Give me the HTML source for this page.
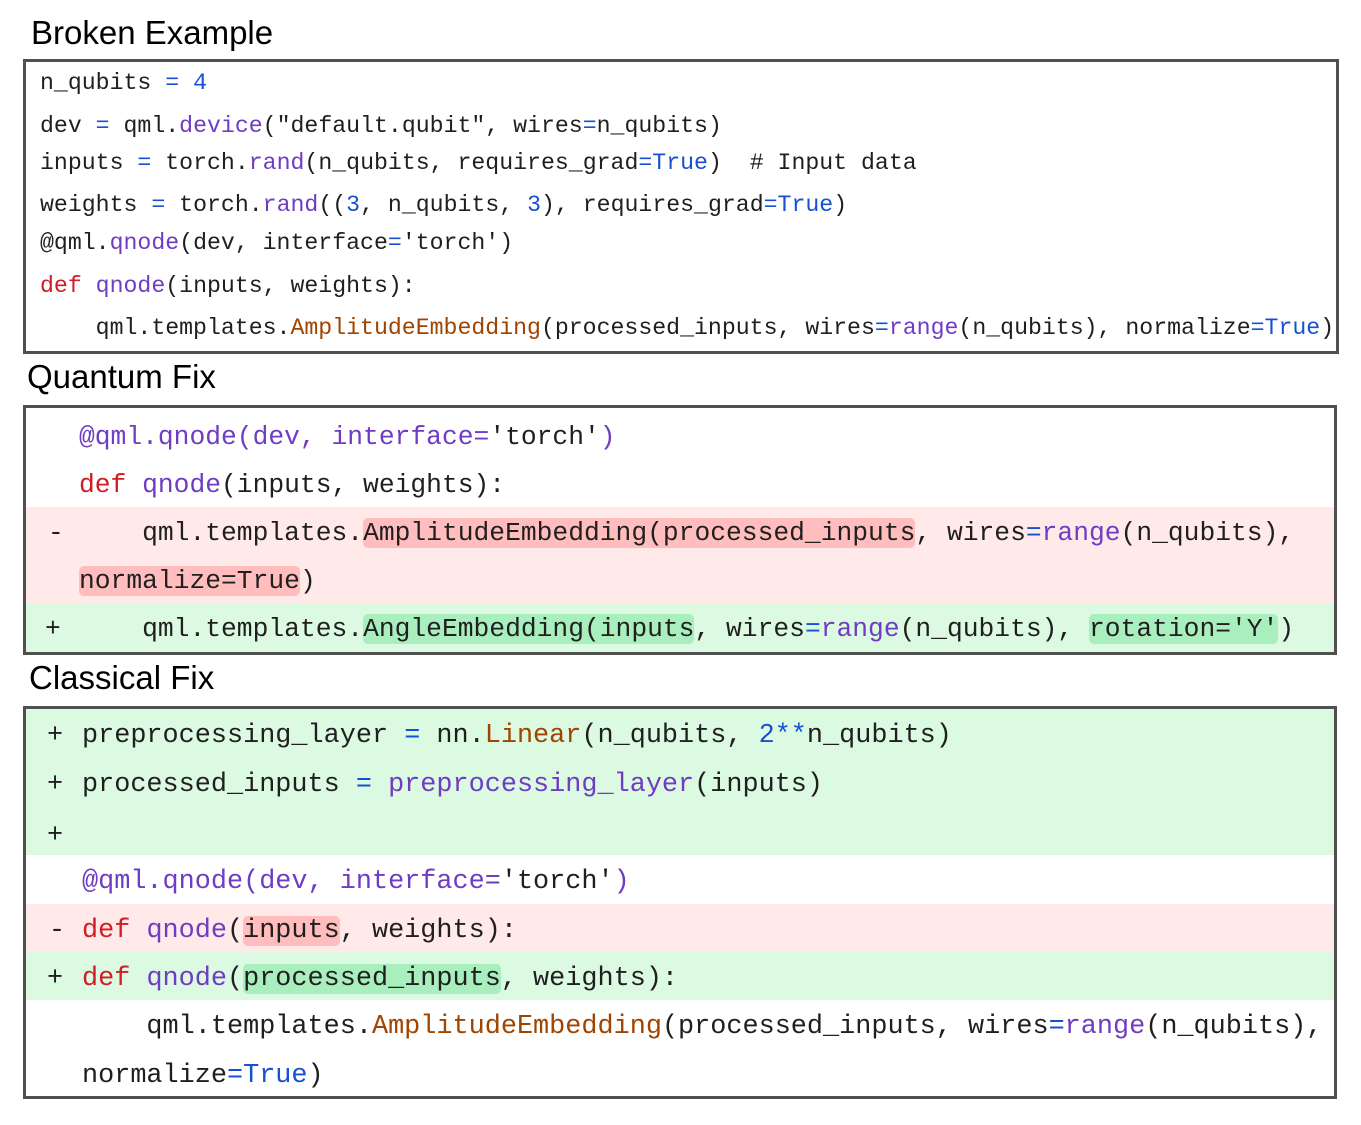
<!DOCTYPE html>
<html><head><meta charset="utf-8"><style>
*{margin:0;padding:0;box-sizing:border-box}
body{width:1361px;height:1125px;background:#fff;position:relative;overflow:hidden;font-family:"Liberation Mono",monospace;color:#1f1f1f}
.t{position:absolute;font-family:"Liberation Sans",Arial,sans-serif;font-size:33px;color:#000;line-height:36px}
.box{position:absolute;border:3px solid #505050}
.band{position:absolute;left:26px;width:1308px}
.l{position:absolute;white-space:pre;height:40px;line-height:40px}
.b .l{font-size:23.2px}
.q .l{font-size:26.3px}
.c .l{font-size:26.85px}
.e{color:#1750d0}.p{color:#6f3cc3}.r{color:#d01c24}.o{color:#a04400}
.hr{background:#ffbdbd;border-radius:5px}
.hg{background:#a9efbe;border-radius:5px}
</style></head><body>
<div class="t" style="left:31px;top:15px">Broken Example</div>
<div class="box" style="left:23px;top:59px;width:1316px;height:295px"></div>
<div class="b">
<div class="l" style="left:40px;top:63px">n_qubits <span class="e">=</span> <span class="e">4</span></div>
<div class="l" style="left:40px;top:106px">dev <span class="e">=</span> qml.<span class="p">device</span>("default.qubit", wires<span class="e">=</span>n_qubits)</div>
<div class="l" style="left:40px;top:143px">inputs <span class="e">=</span> torch.<span class="p">rand</span>(n_qubits, requires_grad<span class="e">=True</span>)  # Input data</div>
<div class="l" style="left:40px;top:185px">weights <span class="e">=</span> torch.<span class="p">rand</span>((<span class="e">3</span>, n_qubits, <span class="e">3</span>), requires_grad<span class="e">=True</span>)</div>
<div class="l" style="left:40px;top:223px">@qml.<span class="p">qnode</span>(dev, interface<span class="e">=</span>'torch')</div>
<div class="l" style="left:40px;top:266px"><span class="r">def</span> <span class="p">qnode</span>(inputs, weights):</div>
<div class="l" style="left:40px;top:308px">    qml.templates.<span class="o">AmplitudeEmbedding</span>(processed_inputs, wires<span class="e">=</span><span class="p">range</span>(n_qubits), normalize<span class="e">=True</span>)</div>
</div>

<div class="t" style="left:27px;top:359px">Quantum Fix</div>
<div class="band" style="top:507px;height:96px;background:#ffe9e9"></div>
<div class="band" style="top:603px;height:49px;background:#dcfae2"></div>
<div class="box" style="left:23px;top:405px;width:1314px;height:250px"></div>
<div class="q">
<div class="l" style="left:79px;top:417px"><span class="p">@qml.qnode(dev, interface=</span>'torch'<span class="p">)</span></div>
<div class="l" style="left:79px;top:465px"><span class="r">def</span> <span class="p">qnode</span>(inputs, weights):</div>
<div class="l" style="left:48px;top:513px">-</div>
<div class="l" style="left:79px;top:513px">    qml.templates.<span class="hr">AmplitudeEmbedding(processed_inputs</span>, wires<span class="e">=</span><span class="p">range</span>(n_qubits),</div>
<div class="l" style="left:79px;top:561px"><span class="hr">normalize=True</span>)</div>
<div class="l" style="left:45px;top:609px">+</div>
<div class="l" style="left:79px;top:609px">    qml.templates.<span class="hg">AngleEmbedding(inputs</span>, wires<span class="e">=</span><span class="p">range</span>(n_qubits), <span class="hg">rotation='Y'</span>)</div>
</div>

<div class="t" style="left:29px;top:660px">Classical Fix</div>
<div class="band" style="top:709px;height:146px;background:#dcfae2"></div>
<div class="band" style="top:904px;height:48px;background:#ffe9e9"></div>
<div class="band" style="top:952px;height:48px;background:#dcfae2"></div>
<div class="box" style="left:23px;top:706px;width:1314px;height:393px"></div>
<div class="c">
<div class="l" style="left:47px;top:716px">+</div>
<div class="l" style="left:82px;top:716px">preprocessing_layer <span class="e">=</span> nn.<span class="o">Linear</span>(n_qubits, <span class="e">2**</span>n_qubits)</div>
<div class="l" style="left:47px;top:765px">+</div>
<div class="l" style="left:82px;top:765px">processed_inputs <span class="e">=</span> <span class="p">preprocessing_layer</span>(inputs)</div>
<div class="l" style="left:47px;top:816px">+</div>
<div class="l" style="left:82px;top:862px"><span class="p">@qml.qnode(dev, interface=</span>'torch'<span class="p">)</span></div>
<div class="l" style="left:49px;top:911px">-</div>
<div class="l" style="left:82px;top:911px"><span class="r">def</span> <span class="p">qnode</span>(<span class="hr">inputs</span>, weights):</div>
<div class="l" style="left:47px;top:959px">+</div>
<div class="l" style="left:82px;top:959px"><span class="r">def</span> <span class="p">qnode</span>(<span class="hg">processed_inputs</span>, weights):</div>
<div class="l" style="left:82px;top:1007px">    qml.templates.<span class="o">AmplitudeEmbedding</span>(processed_inputs, wires<span class="e">=</span><span class="p">range</span>(n_qubits),</div>
<div class="l" style="left:82px;top:1056px">normalize<span class="e">=True</span>)</div>
</div>
</body></html>
